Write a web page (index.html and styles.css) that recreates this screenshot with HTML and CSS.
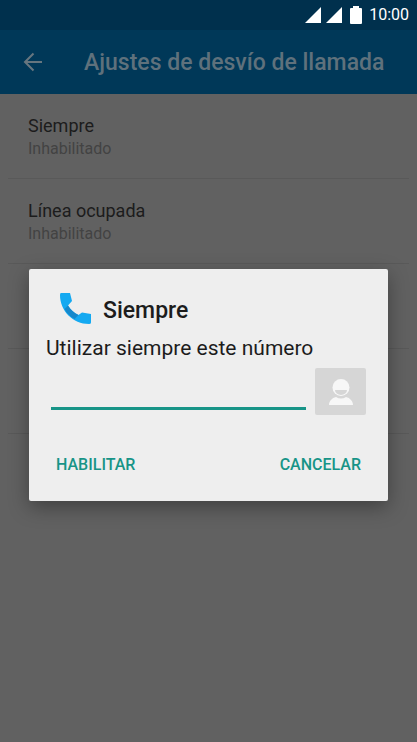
FILE: index.html
```html
<!DOCTYPE html>
<html lang="es">
<head>
<meta charset="utf-8">
<meta name="viewport" content="width=device-width, initial-scale=1">
<title>Ajustes de desvío de llamada</title>
<link rel="stylesheet" href="styles.css">
</head>
<body>
<div class="status">
  <svg class="signal" viewBox="0 0 16 16" aria-hidden="true"><path d="M16 0v16H0z"/></svg>
  <svg class="signal" viewBox="0 0 16 16" aria-hidden="true"><path d="M16 0v16H0z"/></svg>
  <svg class="battery" viewBox="0 0 12 18" aria-hidden="true"><path d="M3 0h6v2h2a1 1 0 0 1 1 1v14a1 1 0 0 1-1 1H1a1 1 0 0 1-1-1V3a1 1 0 0 1 1-1h2z"/></svg>
  <time class="clock">10:00</time>
</div>
<header class="appbar">
  <button class="back" type="button" aria-label="Atrás">
    <svg viewBox="0 0 20 20" aria-hidden="true"><path d="M19 10H2M10.500 1.500 2 10l8.500 8.500"/></svg>
  </button>
  <h1 class="title">Ajustes de desvío de llamada</h1>
</header>
<main>
  <ul class="list">
    <li class="row"><span class="name">Siempre</span><span class="state">Inhabilitado</span></li>
    <li class="row"><span class="name">Línea ocupada</span><span class="state">Inhabilitado</span></li>
    <li class="row"></li>
    <li class="row"></li>
  </ul>
</main>
<div class="overlay">
  <form class="dialog" role="dialog" aria-labelledby="dialog-title">
    <div class="heading">
      <svg class="phone" viewBox="0 0 31 31" aria-hidden="true">
        <path fill="#14a9f1" d="M1 0h9l2 8-4 4.500C10.500 16.500 14 20 18.500 22L22 19.500l9 1.500v8.500q0 1.500-2 1.500C13 31 0 18 0 2Q0 0 1 0z"/>
        <path fill="#1688cb" d="M8 12.500C10.500 16.500 14 20 18.500 22l-4 4C10 23.500 6.500 20 4.500 16z"/>
      </svg>
      <h2 class="dialog-title" id="dialog-title">Siempre</h2>
    </div>
    <label class="message" for="number">Utilizar siempre este número</label>
    <div class="entry">
      <input class="number" id="number" type="tel">
      <button class="contact" type="button" aria-label="Contactos">
        <svg viewBox="0 0 24 26" aria-hidden="true">
          <circle cx="12" cy="8.500" r="8.500" fill="#f7f7f7"/>
          <path fill="#d6d6d6" d="M6 11h12a6 5 0 0 1-12 0z"/>
          <path fill="#f7f7f7" d="M0 26c0-4 3-7 7-8q5 3 10 0c4 1 7 4 7 8z"/>
        </svg>
      </button>
    </div>
    <div class="actions">
      <button class="action" type="button">HABILITAR</button>
      <button class="action" type="button">CANCELAR</button>
    </div>
  </form>
</div>
</body>
</html>
```
FILE: styles.css
```css
* {
  box-sizing: border-box;
}

body {
  margin: 0;
  min-height: 100vh;
  background: #616161;
  font-family: Roboto, "Liberation Sans", sans-serif;
  color: #1c1c1c;
}

button {
  border: 0;
  padding: 0;
  background: none;
  font-family: inherit;
}

.status {
  display: flex;
  align-items: center;
  justify-content: flex-end;
  height: 30px;
  padding: 0 8px;
  background: #00304d;
  color: #fff;
}

.status svg {
  fill: #fff;
}

.signal {
  width: 16px;
  height: 16px;
  margin-right: 5px;
}

.battery {
  width: 12px;
  height: 18px;
  margin: 0 7px 0 3px;
}

.clock {
  font-size: 16px;
  line-height: 20px;
}

.appbar {
  display: flex;
  align-items: center;
  height: 64px;
  background: #003858;
  color: #5f717c;
}

.back {
  width: 84px;
  height: 48px;
  padding-left: 23px;
}

.back svg {
  display: block;
  width: 20px;
  height: 20px;
  fill: none;
  stroke: #66767f;
  stroke-width: 2;
}

.title {
  margin: 0;
  padding-top: 2px;
  font-size: 23px;
  line-height: 28px;
  font-weight: 500;
  white-space: nowrap;
}

.list {
  margin: 0;
  padding: 0 8px;
  list-style: none;
}

.row {
  display: flex;
  flex-direction: column;
  justify-content: center;
  height: 85px;
  padding: 2px 20px 0;
  border-bottom: 1px solid #595959;
}

.name {
  font-size: 18px;
  line-height: 24px;
}

.state {
  font-size: 16px;
  line-height: 22px;
  color: #434343;
}

.overlay {
  position: absolute;
  inset: 28px 0 0;
  display: flex;
  align-items: center;
  justify-content: center;
  padding: 0 29px;
}

.dialog {
  flex: 1;
  min-width: 0;
  padding: 24px 17px 16px;
  border-radius: 2px;
  background: #eee;
  box-shadow: 0 6px 20px rgba(0, 0, 0, 0.35);
}

.heading {
  display: flex;
  align-items: flex-start;
  gap: 12px;
  padding-left: 14px;
}

.phone {
  width: 31px;
  height: 31px;
}

.dialog-title {
  margin: 0;
  padding-top: 2px;
  font-size: 23px;
  line-height: 32px;
  font-weight: 500;
}

.message {
  display: block;
  margin-top: 6px;
  font-size: 21px;
  line-height: 30px;
}

.entry {
  display: flex;
  gap: 9px;
  margin-top: 5px;
  padding: 0 5px;
}

.number {
  flex: 1;
  min-width: 0;
  height: 42px;
  padding: 0 4px;
  border: 0;
  border-bottom: 3px solid #179487;
  background: none;
  font: inherit;
  font-size: 21px;
  outline: 0;
}

.contact {
  display: flex;
  align-items: center;
  justify-content: center;
  width: 51px;
  height: 47px;
  border-radius: 2px;
  background: #d6d6d6;
}

.contact svg {
  width: 24px;
  height: 26px;
}

.actions {
  display: flex;
  justify-content: space-between;
  margin-top: 30px;
  padding: 0 10px;
}

.action {
  height: 40px;
  font-size: 16px;
  line-height: 20px;
  font-weight: 500;
  color: #179487;
}
```
